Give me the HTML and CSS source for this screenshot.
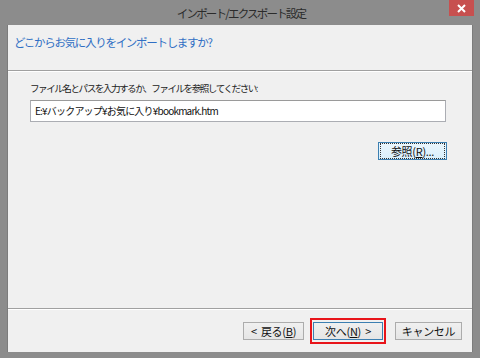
FILE: index.html
```html
<!DOCTYPE html>
<html lang="ja">
<head>
  <meta charset="UTF-8">
  <title>インポート/エクスポート設定</title>
  <link rel="stylesheet" href="styles.css">
</head>
<body>

  <div class="window">
    <div class="titlebar">
      <span class="title">インポート/エクスポート設定</span>
      <div class="close">
        <svg width="9" height="9" viewBox="0 0 9 9"><path d="M1 1 L8 8 M8 1 L1 8" stroke="#fff" stroke-width="2"/></svg>
      </div>
    </div>

    <div class="client">
      <div class="header">
        <p class="heading">どこからお気に入りをインポートしますか?</p>
      </div>

      <div class="content">
        <p class="label">ファイル名とパスを入力するか、ファイルを参照してください:</p>
        <div class="path-input">E:¥バックアップ¥お気に入り¥bookmark.htm</div>
        <div class="browse-row">
          <button class="btn btn-focus"><span class="focus-ring">参照(<u>R</u>)...</span></button>
        </div>
      </div>

      <div class="footer">
        <button class="btn btn-back">&lt; 戻る(<u>B</u>)</button>
        <div class="highlight">
          <button class="btn btn-default">次へ(<u>N</u>) &gt;</button>
        </div>
        <button class="btn btn-cancel">キャンセル</button>
      </div>
    </div>
  </div>

</body>
</html>
```

FILE: styles.css
```css
body{
  margin: 0;
  background-color: #8c8c8c;
  font-family: "Noto Sans CJK JP", "Noto Sans", sans-serif;
  width: 480px;
  height: 358px;
  overflow: hidden;
}

.window{
  display: flex;
  flex-direction: column;
  height: 358px;
}

.titlebar{
  position: relative;
  height: 25px;
  display: flex;
  align-items: center;
  justify-content: center;
}

.title{
  font-size: 11.5px;
  letter-spacing: -1.8px;
  color: #2b2b2b;
  margin-left: 2px;
}

.close{
  position: absolute;
  top: 0;
  right: 6px;
  width: 25px;
  height: 16px;
  background-color: #c7504f;
  display: flex;
  align-items: center;
  justify-content: center;
}

.client{
  margin: 0 7px 6px 7px;
  height: 327px;
  background-color: #f0f0f0;
  border-left: 1px solid #7c7c7c;
  border-right: 1px solid #7c7c7c;
  display: flex;
  flex-direction: column;
}

.header{
  height: 45px;
  border-bottom: 1px solid #a0a0a0;
  box-shadow: 0 1px 0 #ffffff;
  padding-left: 6px;
}

p.heading{
  margin: 9px 0 0 0;
  font-size: 11.5px;
  letter-spacing: -1.3px;
  color: #2f6fc4;
}

.content{
  flex: 1;
  padding: 10px 26px 0 22px;
}

p.label{
  margin: 0;
  font-size: 9.6px;
  letter-spacing: -1.5px;
  color: #222;
  line-height: 14px;
}

.path-input{
  margin-top: 5px;
  height: 20px;
  border: 1px solid #abadb3;
  border-top-color: #9a9a9a;
  background-color: #ffffff;
  font-size: 10px;
  letter-spacing: -0.8px;
  line-height: 19px;
  padding-left: 4px;
  color: #111;
}

.browse-row{
  display: flex;
  justify-content: flex-end;
  margin-top: 20px;
  margin-right: -1px;
}

.btn{
  font-family: "Noto Sans CJK JP", "Noto Sans", sans-serif;
  font-size: 11px;
  letter-spacing: -0.3px;
  word-spacing: 2px;
  color: #111;
  height: 18px;
  padding: 0;
  border: 1px solid #acacac;
  background: linear-gradient(#f0f0f0, #e5e5e5);
  display: flex;
  align-items: center;
  justify-content: center;
}

.btn u{
  text-underline-offset: 1px;
}

.btn-focus{
  width: 69px;
  border-color: #3c7fb1;
  background: linear-gradient(#eaf6fd, #d9f0fc);
  padding: 1px;
}

.focus-ring{
  flex: 1;
  height: 100%;
  border: 1px dotted #333;
  display: flex;
  align-items: center;
  justify-content: center;
}

.footer{
  height: 43px;
  border-top: 1px solid #a0a0a0;
  box-shadow: inset 0 1px 0 #ffffff;
  display: flex;
  align-items: center;
  padding-left: 235px;
}

.btn-back{
  width: 61px;
}

.highlight{
  margin-left: 6px;
  border: 2px solid #e8141a;
  padding: 2px 1px;
}

.btn-default{
  width: 70px;
  border-color: #3c7fb1;
}

.btn-cancel{
  width: 67px;
  margin-left: 9px;
}
```
